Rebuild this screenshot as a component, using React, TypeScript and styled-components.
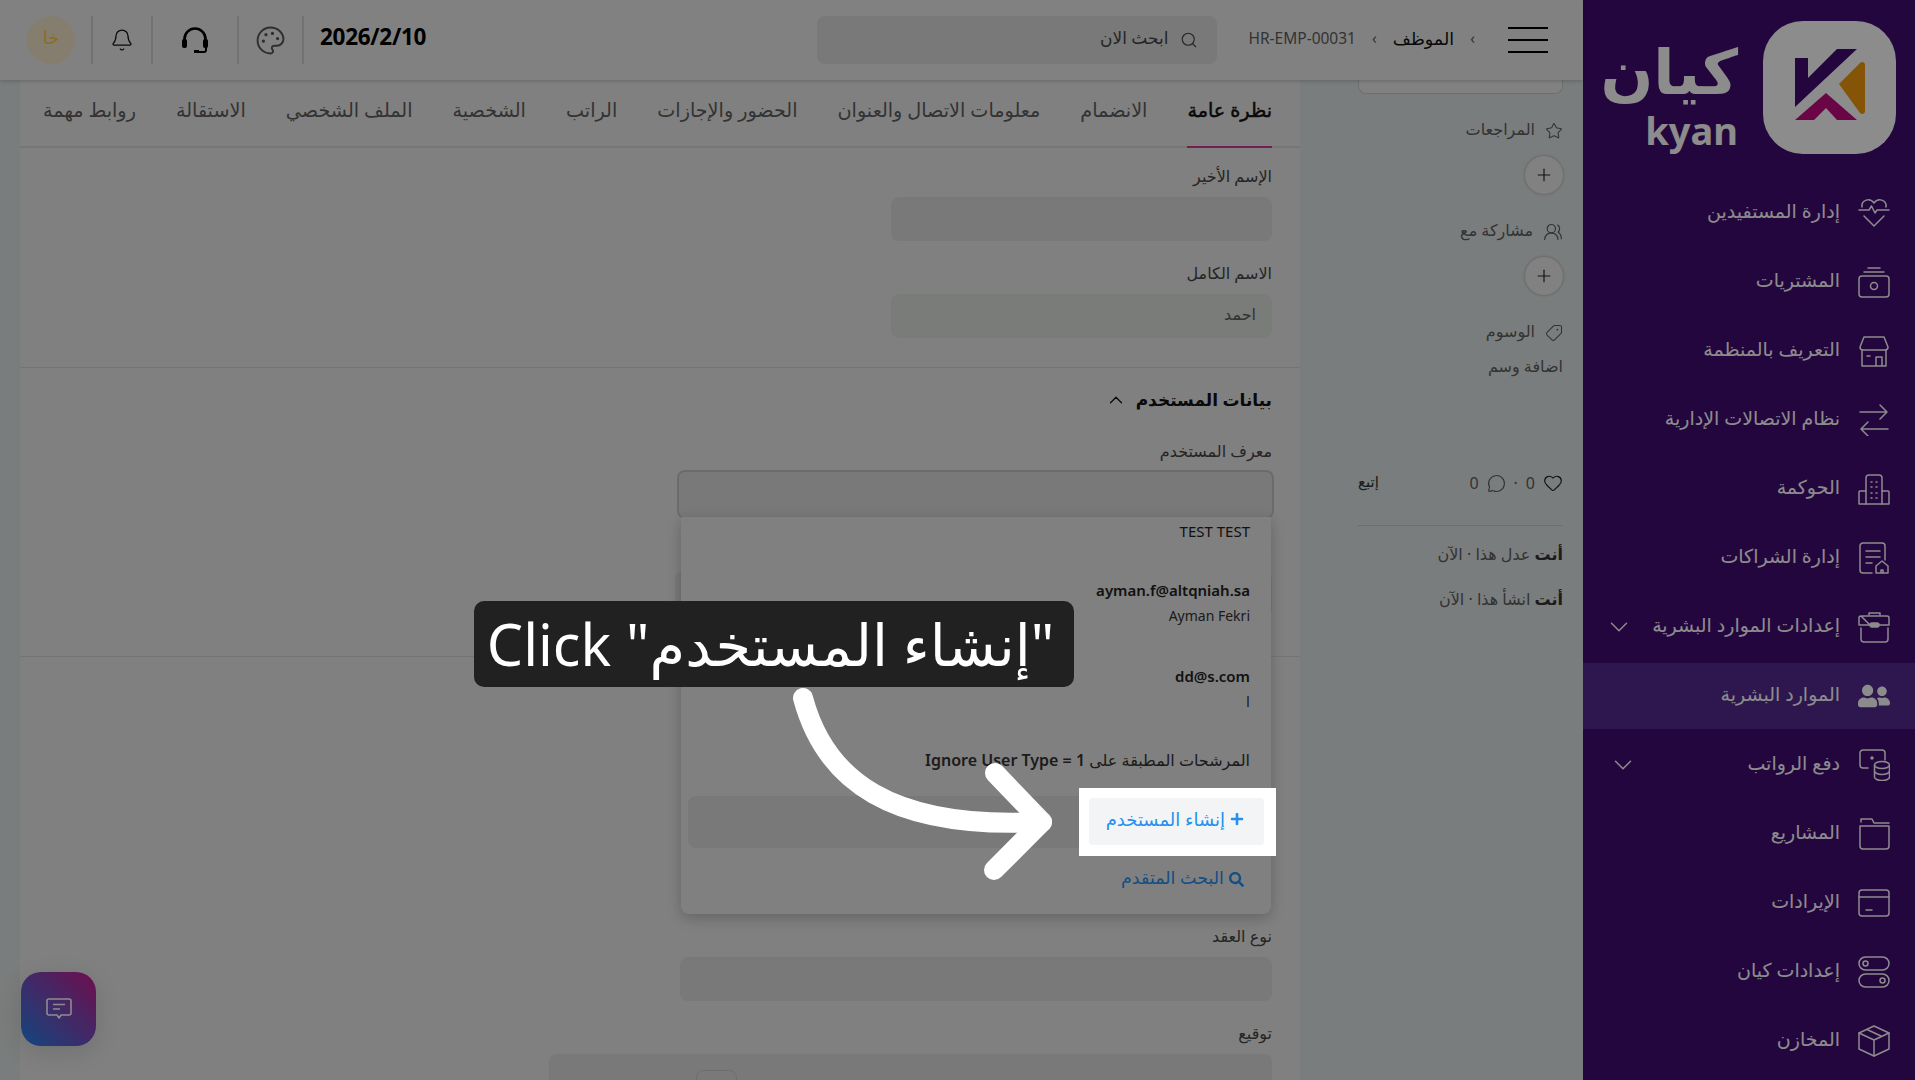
import { ReactNode } from 'react';
import styled, { createGlobalStyle } from 'styled-components';
import { Bell, ChevronDown, ChevronUp, Heart, MessageCircle, Palette, Plus, Search, Star, Tag, UsersRound } from 'lucide-react';
import { FaPlus, FaSearch, FaUserFriends } from 'react-icons/fa';

const fontStack = `"Noto Sans", "DejaVu Sans", sans-serif`;

const GlobalStyle = createGlobalStyle`
  html, body {
    margin: 0;
    padding: 0;
    overflow: hidden;
  }
  * {
    box-sizing: border-box;
  }
`;

const Page = styled.div`
  position: relative;
  display: flex;
  width: 1915px;
  height: 1080px;
  overflow: hidden;
  font-family: ${fontStack};
  background: #e9e9e9;
`;

const Sidebar = styled.aside`
  flex: none;
  width: 332px;
  height: 100%;
  background: #430b73;
`;

const Brand = styled.div`
  display: flex;
  align-items: center;
  gap: 25px;
  padding: 21px 19px 0 0;
`;

const LogoTile = styled.div`
  display: flex;
  align-items: center;
  justify-content: center;
  flex: none;
  width: 133px;
  height: 133px;
  border-radius: 40px;
  background: #fff;
`;

const WordMark = styled.div`
  display: flex;
  flex-direction: column;
  align-items: flex-start;
  color: #fff;
  font-weight: 700;
`;

const WordAr = styled.span`
  font-size: 62px;
  line-height: 84px;
`;

const WordEn = styled.span`
  font-size: 38px;
  line-height: 36px;
`;

const Nav = styled.nav`
  display: flex;
  flex-direction: column;
  gap: 3px;
  margin-top: 26px;
`;

const NavItem = styled.div<{ $active?: boolean }>`
  display: flex;
  align-items: center;
  gap: 18px;
  height: 66px;
  padding: 0 25px 0 25px;
  color: #fff;
  font-size: 19px;
  background: ${p => (p.$active ? '#552891' : 'transparent')};

  svg {
    flex: none;
  }
`;

const NavLabel = styled.span`
  padding-bottom: 5px;
  white-space: nowrap;
`;

const NavCaret = styled.span`
  display: flex;
  margin-right: auto;
`;

const Main = styled.div`
  display: flex;
  flex-direction: column;
  flex: none;
  width: 1583px;
  height: 100%;
`;

const Header = styled.header`
  position: relative;
  z-index: 2;
  display: flex;
  align-items: center;
  justify-content: space-between;
  flex: none;
  height: 80px;
  padding: 0 35px 0 27px;
  background: #ececec;
  box-shadow: 0 1px 4px rgba(0, 0, 0, 0.2);
`;

const HeaderGroup = styled.div`
  display: flex;
  align-items: center;
`;

const Hamburger = styled.div`
  display: flex;
  flex-direction: column;
  justify-content: space-between;
  width: 40px;
  height: 26px;

  span {
    height: 2px;
    background: #000;
  }
`;

const Crumbs = styled.div`
  display: flex;
  align-items: center;
  gap: 16px;
  margin-right: 33px;
  padding-bottom: 4px;
  font-size: 15.5px;
  color: #5d5d5d;
`;

const CrumbStrong = styled.span`
  color: #111;
  font-size: 17.5px;
  font-weight: 500;
`;

const SearchBox = styled.div`
  display: flex;
  align-items: center;
  gap: 12px;
  width: 400px;
  height: 48px;
  margin-right: 31px;
  padding: 0 19px;
  border-radius: 8px;
  background: #dcdcdc;
  color: #444;
  font-size: 17px;

  span {
    padding-bottom: 5px;
  }
`;

const HeaderDate = styled.div`
  width: 108px;
  margin: 0 0 8px 16px;
  color: #000;
  font-size: 22.5px;
  font-weight: 700;
  letter-spacing: -0.3px;
  white-space: nowrap;
  direction: ltr;
`;

const Rule = styled.div`
  width: 2px;
  height: 48px;
  background: #d0d0d0;
`;

const HeaderIcon = styled.div<{ $width: number }>`
  display: flex;
  align-items: center;
  justify-content: center;
  width: ${p => p.$width}px;
`;

const Avatar = styled.div`
  display: flex;
  align-items: center;
  justify-content: center;
  width: 48px;
  height: 48px;
  margin-right: 16px;
  padding-bottom: 6px;
  border-radius: 50%;
  background: #f2e3c6;
  color: #ffc846;
  font-size: 18px;
`;

const Body = styled.div`
  display: flex;
  flex: 1;
  min-height: 0;
  padding-left: 20px;
  background: #dfe3e3;
`;

const Rail = styled.div`
  flex: none;
  width: 283px;
  padding: 0 20px 0 58px;
  color: #5d5d5d;
  font-size: 16px;
`;

const RailBox = styled.div`
  height: 14px;
  border: 1px solid #c8c8c8;
  border-top: none;
  border-radius: 0 0 8px 8px;
  background: #ececec;
`;

const RailLabel = styled.div<{ $top: number }>`
  display: flex;
  align-items: center;
  gap: 10px;
  height: 20px;
  margin-top: ${p => p.$top}px;
  white-space: nowrap;

  span {
    padding-bottom: 4px;
  }
`;

const RoundAdd = styled.div`
  display: flex;
  align-items: center;
  justify-content: center;
  width: 38px;
  height: 38px;
  margin-top: 15px;
  border-radius: 50%;
  background: #ececec;
  box-shadow: 0 0 3px rgba(0, 0, 0, 0.3);
  color: #222;
`;

const Stats = styled.div`
  display: flex;
  align-items: center;
  gap: 8px;
  height: 20px;
  margin-top: 95px;
`;

const Follow = styled.span`
  margin-right: auto;
  padding-bottom: 4px;
  color: #333;
  font-size: 15px;
`;

const RailRule = styled.div`
  height: 1px;
  margin-top: 32px;
  background: #c8c8c8;
`;

const Activity = styled.div<{ $top: number }>`
  height: 20px;
  margin-top: ${p => p.$top}px;
  line-height: 16px;
  white-space: nowrap;

  b {
    color: #333;
  }
`;

const Card = styled.main`
  flex: none;
  width: 1280px;
  overflow: hidden;
  background: #e9e9e9;
`;

const Tabs = styled.div`
  display: flex;
  gap: 40px;
  height: 68px;
  padding-right: 28px;
  border-bottom: 2px solid #d8d8d8;
`;

const TabItem = styled.div<{ $active?: boolean }>`
  display: flex;
  align-items: center;
  height: 68px;
  padding-bottom: 8px;
  color: ${p => (p.$active ? '#111' : '#5d5d5d')};
  font-size: 19.2px;
  -webkit-text-stroke: ${p => (p.$active ? '0.5px #111' : '0')};
  border-bottom: 2px solid ${p => (p.$active ? '#d33a94' : 'transparent')};
  white-space: nowrap;
`;

const Field = styled.div<{ $width: number; $top: number }>`
  position: relative;
  width: ${p => p.$width}px;
  margin: ${p => p.$top}px 28px 0 0;
`;

const FieldLabel = styled.div`
  height: 20px;
  margin-bottom: 11px;
  color: #444;
  font-size: 16px;
  line-height: 21px;
`;

const FieldBox = styled.div<{ $height?: number; $tint?: string; $focused?: boolean }>`
  display: flex;
  align-items: center;
  height: ${p => p.$height ?? 44}px;
  margin: ${p => (p.$focused ? '-2px -2px 0 0' : '0')};
  padding: 0 16px 5px;
  border-radius: 8px;
  border: ${p => (p.$focused ? '2px solid #c4c4c4' : 'none')};
  background: ${p => p.$tint ?? '#dcdcdc'};
  color: #5d5d5d;
  font-size: 16px;
`;

const Separator = styled.div<{ $top: number }>`
  height: 1px;
  margin-top: ${p => p.$top}px;
  background: #d4d4d4;
`;

const SectionHead = styled.div`
  display: flex;
  align-items: center;
  gap: 9px;
  height: 24px;
  margin: 20px 28px 0 0;
  color: #111;
  font-size: 17px;
  font-weight: 700;

  span {
    padding-bottom: 2px;
  }
`;

const Dropdown = styled.div`
  position: absolute;
  z-index: 3;
  top: 76px;
  right: 1px;
  left: 4px;
  height: 397px;
  padding: 5px 7px 0;
  border-radius: 0 0 8px 8px;
  background: #e9e9e9;
  box-shadow: 0 4px 14px rgba(0, 0, 0, 0.22);
  color: #222;
  font-size: 14px;
`;

const Option = styled.div<{ $top?: number }>`
  padding-right: 14px;
  margin-top: ${p => p.$top ?? 0}px;
  line-height: 18px;
`;

const OptionTitle = styled.div<{ $plain?: boolean }>`
  font-size: 15px;
  font-weight: ${p => (p.$plain ? 400 : 600)};
  direction: ltr;
  text-align: right;
`;

const OptionSub = styled.div`
  margin-top: 8px;
  color: #333;
  direction: ltr;
  text-align: right;
`;

const FilterNote = styled(Option)`
  margin-top: 40px;
  font-size: 16px;
  color: #333;

  b {
    font-weight: 600;
  }
`;

const CreateRow = styled.div`
  height: 52px;
  margin-top: 27px;
  border-radius: 8px;
  background: #dcdcdc;
`;

const AdvancedLink = styled.div`
  display: flex;
  align-items: center;
  gap: 5px;
  margin: 17px 20px 0 0;
  color: #2490ef;
  font-size: 17.5px;

  span {
    padding-bottom: 5px;
  }
`;

const SmallButton = styled.div`
  width: 41px;
  height: 34px;
  margin: 16px auto 0 147px;
  border: 1px solid #c8c8c8;
  border-radius: 8px;
`;

const SignatureBox = styled.div`
  display: flex;
  justify-content: flex-end;
  height: 40px;
  border-radius: 8px;
  background: #dcdcdc;
`;

const ChatButton = styled.div`
  position: absolute;
  left: 21px;
  bottom: 34px;
  display: flex;
  align-items: center;
  justify-content: center;
  width: 75px;
  height: 74px;
  border-radius: 20px;
  background: linear-gradient(45deg, #2280e8, #c81a90);
  box-shadow: 0 6px 24px rgba(0, 0, 0, 0.12);
  color: #fff;
`;

const Dim = styled.div`
  position: absolute;
  z-index: 5;
  inset: 0;
  background: rgba(0, 0, 0, 0.45);
`;

const Spotlight = styled.div`
  position: absolute;
  z-index: 6;
  top: 788px;
  left: 1079px;
  width: 197px;
  height: 68px;
  padding: 10px 12px 11px 10px;
  background: #fff;
`;

const CreateButton = styled.div`
  display: flex;
  align-items: center;
  gap: 5px;
  height: 100%;
  padding: 0 20px 6px 0;
  border-radius: 4px;
  background: #f3f4f6;
  color: #2490ef;
  font-size: 18px;
  white-space: nowrap;
`;

const Callout = styled.div`
  position: absolute;
  z-index: 6;
  top: 601px;
  left: 474px;
  display: flex;
  align-items: center;
  justify-content: center;
  width: 600px;
  height: 86px;
  padding-right: 7px;
  border-radius: 10px;
  background: #212121;
  color: #fff;
  font-family: ${fontStack};
  font-size: 57.5px;
  line-height: 80px;
  white-space: nowrap;
  direction: ltr;
`;

const ArrowLayer = styled.svg`
  position: absolute;
  z-index: 6;
  top: 680px;
  left: 780px;
`;

const LineIcon = ({ children, size = 32 }: { children: ReactNode; size?: number }) => (
  <svg
    width={size}
    height={size}
    viewBox='0 0 32 32'
    fill='none'
    stroke='currentColor'
    strokeWidth={1.5}
    strokeLinecap='round'
    strokeLinejoin='round'
  >
    {children}
  </svg>
);

const navItems: { label: string; icon: ReactNode; caret?: boolean; active?: boolean }[] = [
  {
    label: 'إدارة المستفيدين',
    icon: (
      <LineIcon>
        <path d='M4 10C3 3 12 0 16 6c4-6 13-3 12 4' />
        <path d='M1 13h10l2.5-4 3.5 7 2-3h12' />
        <path d='M6 19l10 10 10-10' />
      </LineIcon>
    ),
  },
  {
    label: 'المشتريات',
    icon: (
      <LineIcon>
        <rect x='1' y='10' width='30' height='21' rx='3' />
        <circle cx='16' cy='20' r='3.5' />
        <path d='M6 6h20M10 2h12' />
      </LineIcon>
    ),
  },
  {
    label: 'التعريف بالمنظمة',
    icon: (
      <LineIcon>
        <path d='M6 2h20l4 10a3 3 0 0 1-3 3H5a3 3 0 0 1-3-3z' />
        <path d='M4 15v16h24V15M18 31v-9h6v9M9 21h3' />
      </LineIcon>
    ),
  },
  {
    label: 'نظام الاتصالات الإدارية',
    icon: (
      <LineIcon>
        <path d='M2 8h27M22 1l7 7-7 7' />
        <path d='M30 25H3M10 18l-7 7 7 7' />
      </LineIcon>
    ),
  },
  {
    label: 'الحوكمة',
    icon: (
      <LineIcon>
        <path d='M8 31V5a3 3 0 0 1 3-3h10a3 3 0 0 1 3 3v26' />
        <path d='M8 18H2a1 1 0 0 0-1 1v12h30V19a1 1 0 0 0-1-1h-6' />
        <path d='M13 9h1M18 9h1M13 14h1M18 14h1M13 20h1M18 20h1M13 25h1M18 25h1' />
      </LineIcon>
    ),
  },
  {
    label: 'إدارة الشراكات',
    icon: (
      <LineIcon>
        <path d='M14 31H5a3 3 0 0 1-3-3V4a3 3 0 0 1 3-3h19a3 3 0 0 1 3 3v14' />
        <path d='M8 9h14M8 15h14M8 21h6' />
        <path d='M18 31v-7l6-5 6 5v7zM23 31v-3h2v3' />
      </LineIcon>
    ),
  },
  {
    label: 'إعدادات الموارد البشرية',
    caret: true,
    icon: (
      <LineIcon>
        <path d='M11 4V2h11v2' />
        <path d='M4 5h25a2 2 0 0 1 2 2v7H21M12 14H1V7a2 2 0 0 1 2-2z' />
        <rect x='12' y='12' width='9' height='4' rx='2' fill='currentColor' />
        <path d='M3 17v11a3 3 0 0 0 3 3h21a3 3 0 0 0 3-3V17' />
      </LineIcon>
    ),
  },
  { label: 'الموارد البشرية', active: true, icon: <FaUserFriends size={32} /> },
  {
    label: 'دفع الرواتب',
    caret: true,
    icon: (
      <LineIcon>
        <path d='M10 19H5a3 3 0 0 1-3-3V4a3 3 0 0 1 3-3h19a3 3 0 0 1 3 3v7' />
        <circle cx='14' cy='9' r='1' fill='currentColor' />
        <ellipse cx='24' cy='16' rx='7.5' ry='3.5' />
        <path d='M16.5 16v12c0 2 3.5 3.5 7.5 3.5s7.5-1.5 7.5-3.5V16' />
        <path d='M16.5 22c0 2 3.5 3.5 7.5 3.5s7.5-1.5 7.5-3.5' />
      </LineIcon>
    ),
  },
  {
    label: 'المشاريع',
    icon: (
      <LineIcon>
        <path d='M2 8v20a3 3 0 0 0 3 3h23a3 3 0 0 0 3-3V8z' />
        <path d='M3 4V1h11l2 4h15' />
      </LineIcon>
    ),
  },
  {
    label: 'الإيرادات',
    icon: (
      <LineIcon>
        <rect x='1' y='3' width='30' height='26' rx='3' />
        <path d='M1 10h30M8 23h6' />
      </LineIcon>
    ),
  },
  {
    label: 'إعدادات كيان',
    icon: (
      <LineIcon>
        <rect x='1' y='1' width='30' height='13' rx='6.5' />
        <circle cx='7.5' cy='7.5' r='2.5' />
        <rect x='1' y='18' width='30' height='13' rx='6.5' />
        <circle cx='24.5' cy='24.5' r='2.5' />
      </LineIcon>
    ),
  },
  {
    label: 'المخازن',
    icon: (
      <LineIcon>
        <path d='M16 1l15 7v16l-15 7-15-7V8z' />
        <path d='M1 8l15 7 15-7M16 15v16M9 4.5l15 7' />
      </LineIcon>
    ),
  },
];

const tabs = [
  'نظرة عامة',
  'الانضمام',
  'معلومات الاتصال والعنوان',
  'الحضور والإجازات',
  'الراتب',
  'الشخصية',
  'الملف الشخصي',
  'الاستقالة',
  'روابط مهمة',
];

const KyanMark = () => (
  <svg width='133' height='133' viewBox='0 0 133 133'>
    <path d='M32 37h13v20l29-29h20L32 86z' fill='#430b73' />
    <path d='M76 63l21-21c2-2 5-1 5 2v46c0 3-3 4-5 2z' fill='#f29a0c' />
    <path d='M32 99l31-27 31 27H74L63 87 51 99z' fill='#c20c80' />
  </svg>
);

const HeadsetIcon = () => (
  <svg width='28' height='28' viewBox='0 0 28 28' fill='none' stroke='#000'>
    <path d='M3.5 16v-3a10.5 10.5 0 0 1 21 0v3' strokeWidth='2.6' />
    <rect x='1' y='13' width='5' height='9' rx='2' fill='#000' stroke='none' />
    <rect x='22' y='13' width='5' height='9' rx='2' fill='#000' stroke='none' />
    <path d='M25 21v3a2 2 0 0 1-2 2h-6' strokeWidth='2' />
    <rect x='13' y='24' width='5' height='3' fill='#000' stroke='none' />
  </svg>
);

const ChatIcon = () => (
  <svg width='26' height='22' viewBox='0 0 26 22' fill='none' stroke='currentColor' strokeWidth='1.6' strokeLinejoin='round'>
    <path d='M3 1h20a2 2 0 0 1 2 2v12a2 2 0 0 1-2 2h-8l-2 3-2-3H3a2 2 0 0 1-2-2V3a2 2 0 0 1 2-2z' />
    <path d='M7 6.5h12M7 11h7' />
  </svg>
);

export default function App() {
  return (
    <Page dir='rtl'>
      <GlobalStyle />
      <Sidebar>
        <Brand>
          <LogoTile>
            <KyanMark />
          </LogoTile>
          <WordMark>
            <WordAr>كيان</WordAr>
            <WordEn>kyan</WordEn>
          </WordMark>
        </Brand>
        <Nav>
          {navItems.map(item => (
            <NavItem key={item.label} $active={item.active}>
              {item.icon}
              <NavLabel>{item.label}</NavLabel>
              {item.caret && (
                <NavCaret>
                  <ChevronDown size={30} strokeWidth={1.2} />
                </NavCaret>
              )}
            </NavItem>
          ))}
        </Nav>
      </Sidebar>

      <Main>
        <Header>
          <HeaderGroup>
            <Hamburger>
              <span />
              <span />
              <span />
            </Hamburger>
            <Crumbs>
              <span>›</span>
              <CrumbStrong>الموظف</CrumbStrong>
              <span>›</span>
              <span dir='ltr'>HR-EMP-00031</span>
            </Crumbs>
            <SearchBox>
              <Search size={18} strokeWidth={1.5} />
              <span>ابحث الان</span>
            </SearchBox>
          </HeaderGroup>
          <HeaderGroup>
            <HeaderDate>2026/2/10</HeaderDate>
            <Rule />
            <HeaderIcon $width={63}>
              <Palette size={31} strokeWidth={1.5} color='#555' />
            </HeaderIcon>
            <Rule />
            <HeaderIcon $width={84}>
              <HeadsetIcon />
            </HeaderIcon>
            <Rule />
            <HeaderIcon $width={58}>
              <Bell size={24} strokeWidth={1.25} color='#111' />
            </HeaderIcon>
            <Rule />
            <Avatar>خا</Avatar>
          </HeaderGroup>
        </Header>

        <Body>
          <Rail>
            <RailBox />
            <RailLabel $top={27}>
              <Star size={18} strokeWidth={1.4} />
              <span>المراجعات</span>
            </RailLabel>
            <RoundAdd>
              <Plus size={20} strokeWidth={1.4} />
            </RoundAdd>
            <RailLabel $top={28}>
              <UsersRound size={20} strokeWidth={1.4} />
              <span>مشاركة مع</span>
            </RailLabel>
            <RoundAdd>
              <Plus size={20} strokeWidth={1.4} />
            </RoundAdd>
            <RailLabel $top={28}>
              <Tag size={18} strokeWidth={1.4} style={{ transform: 'scaleX(-1)' }} />
              <span>الوسوم</span>
            </RailLabel>
            <RailLabel $top={15}>
              <span>اضافة وسم</span>
            </RailLabel>
            <Stats>
              <Heart size={20} strokeWidth={1.4} color='#222' />
              <span>0</span>
              <span>·</span>
              <MessageCircle size={19} strokeWidth={1.4} />
              <span>0</span>
              <Follow>إتبع</Follow>
            </Stats>
            <RailRule />
            <Activity $top={20}>
              <b>أنت</b> عدل هذا · الآن
            </Activity>
            <Activity $top={25}>
              <b>أنت</b> انشأ هذا · الآن
            </Activity>
          </Rail>

          <Card>
            <Tabs>
              {tabs.map((tab, i) => (
                <TabItem key={tab} $active={i === 0}>
                  {tab}
                </TabItem>
              ))}
            </Tabs>
            <Field $width={381} $top={18}>
              <FieldLabel>الإسم الأخير</FieldLabel>
              <FieldBox />
            </Field>
            <Field $width={381} $top={22}>
              <FieldLabel>الاسم الكامل</FieldLabel>
              <FieldBox $tint='#dde2dd'>احمد</FieldBox>
            </Field>
            <Separator $top={29} />
            <SectionHead>
              <span>بيانات المستخدم</span>
              <ChevronUp size={22} strokeWidth={1.4} />
            </SectionHead>
            <Field $width={595} $top={29}>
              <FieldLabel>معرف المستخدم</FieldLabel>
              <FieldBox $height={49} $focused />
              <Dropdown>
                <Option>
                  <OptionTitle $plain>TEST TEST</OptionTitle>
                </Option>
                <Option $top={41}>
                  <OptionTitle>ayman.f@altqniah.sa</OptionTitle>
                  <OptionSub>Ayman Fekri</OptionSub>
                </Option>
                <Option $top={42}>
                  <OptionTitle>dd@s.com</OptionTitle>
                  <OptionSub>ا</OptionSub>
                </Option>
                <FilterNote>
                  المرشحات المطبقة على <b>Ignore User Type = 1</b>
                </FilterNote>
                <CreateRow />
                <AdvancedLink>
                  <FaSearch size={15} />
                  <span>البحث المتقدم</span>
                </AdvancedLink>
              </Dropdown>
            </Field>
            <Field $width={597} $top={21}>
              <FieldLabel>الاسم</FieldLabel>
              <FieldBox $height={47} />
            </Field>
            <Separator $top={38} />
            <Field $width={592} $top={269}>
              <FieldLabel>نوع العقد</FieldLabel>
              <FieldBox />
            </Field>
            <Field $width={723} $top={22}>
              <FieldLabel>توقيع</FieldLabel>
              <SignatureBox>
                <SmallButton />
              </SignatureBox>
            </Field>
          </Card>
        </Body>
      </Main>

      <ChatButton>
        <ChatIcon />
      </ChatButton>

      <Dim />

      <Spotlight>
        <CreateButton>
          <FaPlus size={14} />
          <span>إنشاء المستخدم</span>
        </CreateButton>
      </Spotlight>
      <Callout>Click "إنشاء المستخدم"</Callout>
      <ArrowLayer width='280' height='210' viewBox='0 0 280 210' fill='none' stroke='#fff' strokeWidth='20' strokeLinecap='round' strokeLinejoin='round'>
        <path d='M23 18C45 100 110 150 262 142' />
        <path d='M215 93l47 49-48 48' />
      </ArrowLayer>
    </Page>
  );
}
